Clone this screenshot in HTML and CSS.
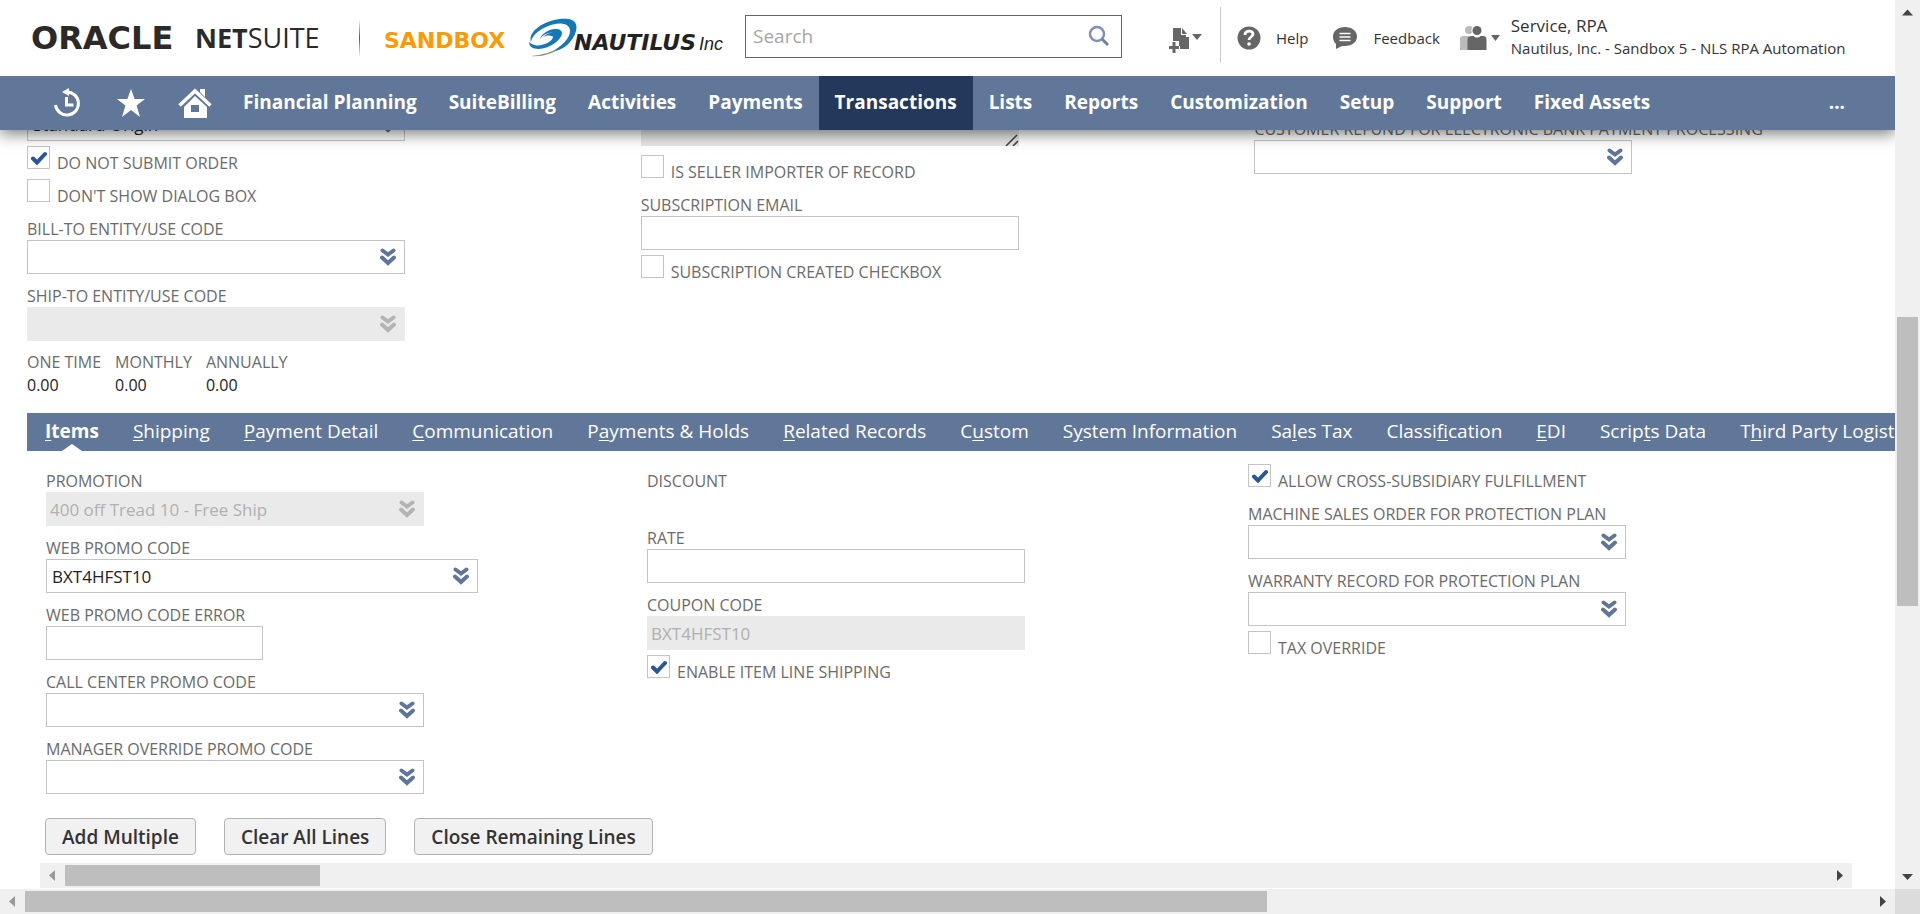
FILE: index.html
```html
<!DOCTYPE html>
<html lang="en">
<head>
<meta charset="utf-8">
<title>Sales Order - NetSuite</title>
<link rel="stylesheet" href="styles.css">
</head>
<body>
<svg class="defs" aria-hidden="true">
  <symbol id="chev" viewBox="0 0 16 18"><path d="M2.500 2.500 8 6.500l5.500-4M2 9.500l6 5.500 6-5.500" fill="none" stroke="currentColor" stroke-width="4" stroke-linecap="round"/></symbol>
  <symbol id="tick" viewBox="0 0 16 14"><path d="M2 7.500 6 11.500 14 3" fill="none" stroke="currentColor" stroke-width="4" stroke-linecap="round"/></symbol>
</svg>
<div class="window">
  <div class="page">
    <header class="top">
      <div class="brandbar">
        <div class="oracle"><span class="oracle-word">ORACLE</span><span class="netsuite"><b>NET</b>SUITE</span></div>
        <span class="brand-rule"></span>
        <span class="sandbox">SANDBOX</span>
        <div class="nautilus">
          <svg width="50" height="40" viewBox="0 0 50 40" aria-hidden="true">
            <path d="M3 24C-1 12 22-1 40 1c12 1 10 14 2 23-6 7-13 9-19 10 11-5 20-15 19-22C41 4 28 4 18 9 9 13 4 18 3 24z" fill="#1478b8"/>
            <path d="M1 24c0 9 15 9 26 1 9-7 9-13 2-14-8-1-17 6-17 10 2-4 9-7 13-6 4 2 1 6-4 9-7 4-15 5-20 0z" fill="#1478b8"/>
            <path d="M15 19c4-4 11-6 13-3 1 2-2 5-5 7 2-3 3-5 0-5-3-1-6 0-8 1z" fill="#1478b8"/>
            <path d="M3 38c11 1 21-2 29-8-8 4-18 7-29 8z" fill="#8b8f68"/>
          </svg>
          <span class="nautilus-word">NAUTILUS</span><span class="nautilus-inc">Inc</span>
        </div>
        <div class="search">
          <input type="text" placeholder="Search" aria-label="Search">
          <svg width="22" height="22" viewBox="0 0 22 22" aria-hidden="true"><circle cx="9" cy="9" r="7" fill="none" stroke="#7e8fb5" stroke-width="2.500"/><path d="M14 14l6 6" stroke="#6d80a8" stroke-width="3"/></svg>
        </div>
        <button class="iconbtn create" aria-label="Create new">
          <svg width="34" height="28" viewBox="0 0 34 28" aria-hidden="true"><path d="M5 2h8v7h5v4h-5v5H11v-3H5z" fill="#666"/><path d="M14 2l5 6h-5zM13 11h8v12h-9v-3h-1v-5h2z" fill="#666"/><path d="M6 16v11M1 21.500h10" stroke="#666" stroke-width="3"/><path d="M24 8h10l-5 6z" fill="#666"/></svg>
        </button>
        <span class="top-rule"></span>
        <a class="toplink" href="#">
          <svg width="24" height="24" viewBox="0 0 24 24" aria-hidden="true"><circle cx="12" cy="12" r="11.500" fill="#666"/><path d="M8 9c0-5 8-5 8-1 0 3-4 3-4 6" fill="none" stroke="#fff" stroke-width="2.800"/><circle cx="12" cy="18" r="1.800" fill="#fff"/></svg>
          Help</a>
        <a class="toplink feedback" href="#">
          <svg width="26" height="24" viewBox="0 0 26 24" aria-hidden="true"><path d="M13 1c7 0 12 4 12 9.500S20 20 13 20c-2 0-3 0-4 .500L4 23v-5C2 16 1 13.500 1 10.500 1 5 6 1 13 1z" fill="#666"/><path d="M7.500 7.500h11M7.500 11h11M7.500 14.500h11" stroke="#fff" stroke-width="1.600"/></svg>
          Feedback</a>
        <button class="iconbtn roles" aria-label="Change role">
          <svg width="40" height="26" viewBox="0 0 40 26" aria-hidden="true"><circle cx="9" cy="5" r="4" fill="#bbb"/><path d="M0 25V14c0-2 1-3 3-3h6v14z" fill="#bbb"/><circle cx="17" cy="5.500" r="5.500" fill="#fff"/><circle cx="17" cy="5.500" r="4.500" fill="#666"/><path d="M7.500 25V15c0-3 1.500-4 4-4h2c2 2 5 2 7 0h2c3 0 4 1 4 4v10z" fill="#666"/><path d="M31 10h9l-4.500 6z" fill="#666"/></svg>
        </button>
        <div class="user"><div class="user-name">Service, RPA</div><div class="user-role">Nautilus, Inc. - Sandbox 5 - NLS RPA Automation</div></div>
      </div>
      <nav class="mainnav">
        <a class="nav-icon" href="#" aria-label="Recent records"><svg width="28" height="30" viewBox="0 0 28 30" aria-hidden="true"><path d="M2.500 17a11.500 11.500 0 1 0 11-13" fill="none" stroke="#fff" stroke-width="3"/><path d="M9 4l7-4v8z" fill="#fff"/><path d="M13.500 9v8h7" fill="none" stroke="#fff" stroke-width="3"/></svg></a>
        <a class="nav-icon" href="#" aria-label="Shortcuts"><svg width="28" height="28" viewBox="0 0 28 28" aria-hidden="true"><path d="M14 0l3.600 10H28l-8.400 6.500L23 28l-9-7-9 7 3.400-11.500L0 10h10.400z" fill="#fff"/></svg></a>
        <a class="nav-icon" href="#" aria-label="Home"><svg width="34" height="30" viewBox="0 0 34 30" aria-hidden="true"><path d="M1.500 17.500 17 3l15.500 14.500" fill="none" stroke="#fff" stroke-width="3.500"/><path d="M22 1h5v8l-5-5z" fill="#fff"/><path d="M17 8l12 11v11H6V19z M13 17v7h8v-7z" fill="#fff" fill-rule="evenodd"/></svg></a>
        <a href="#">Financial Planning</a><a href="#">SuiteBilling</a><a href="#">Activities</a><a href="#">Payments</a><a class="current" href="#">Transactions</a><a href="#">Lists</a><a href="#">Reports</a><a href="#">Customization</a><a href="#">Setup</a><a href="#">Support</a><a href="#">Fixed Assets</a><a class="more" href="#">...</a>
      </nav>
    </header>

    <main>
      <form class="columns summary">
        <div>
          <div class="field"><label for="origin">Origin</label><div class="pick"><select id="origin"><option>Standard Origin</option></select><svg><use href="#chev"/></svg></div></div>
          <label class="check"><span><input type="checkbox" checked><svg><use href="#tick"/></svg></span>Do not submit order</label>
          <label class="check"><span><input type="checkbox"></span>Don't show dialog box</label>
          <div class="field"><label for="billto">Bill-to entity/use code</label><div class="pick"><select id="billto"><option></option></select><svg><use href="#chev"/></svg></div></div>
          <div class="field"><label for="shipto">Ship-to entity/use code</label><div class="pick"><select id="shipto" disabled><option></option></select><svg><use href="#chev"/></svg></div></div>
          <dl class="totals"><div><dt>One time</dt><dd>0.00</dd></div><div><dt>Monthly</dt><dd>0.00</dd></div><div><dt>Annually</dt><dd>0.00</dd></div></dl>
        </div>
        <div>
          <div class="memo"><textarea aria-label="Memo" readonly></textarea><svg width="14" height="12" viewBox="0 0 14 12" aria-hidden="true"><path d="M1 12 12 1M8 12l5-5" stroke="#444" stroke-width="1.600"/></svg></div>
          <label class="check"><span><input type="checkbox"></span>Is seller importer of record</label>
          <div class="field"><label for="email">Subscription email</label><input class="box" id="email" type="text"></div>
          <label class="check"><span><input type="checkbox"></span>Subscription created checkbox</label>
        </div>
        <div class="refund">
          <div class="field"><label for="refund">Customer refund for electronic bank payment processing</label><div class="pick"><select id="refund"><option></option></select><svg><use href="#chev"/></svg></div></div>
        </div>
      </form>

      <nav class="tabs">
        <a class="active" href="#"><u>I</u>tems</a><a href="#"><u>S</u>hipping</a><a href="#"><u>P</u>ayment Detail</a><a href="#"><u>C</u>ommunication</a><a href="#">P<u>a</u>yments &amp; Holds</a><a href="#"><u>R</u>elated Records</a><a href="#">C<u>u</u>stom</a><a href="#">S<u>y</u>stem Information</a><a href="#">Sa<u>l</u>es Tax</a><a href="#">Classi<u>f</u>ication</a><a href="#"><u>E</u>DI</a><a href="#">Scrip<u>t</u>s Data</a><a href="#">T<u>h</u>ird Party Logistics</a>
      </nav>

      <form class="columns items">
        <div>
          <div class="field"><label for="promo">Promotion</label><div class="pick"><select id="promo" disabled><option>400 off Tread 10 - Free Ship</option></select><svg><use href="#chev"/></svg></div></div>
          <div class="field"><label for="web">Web promo code</label><div class="pick wide"><select id="web"><option>BXT4HFST10</option></select><svg><use href="#chev"/></svg></div></div>
          <div class="field"><label for="weberr">Web promo code error</label><input class="box narrow" id="weberr" type="text"></div>
          <div class="field"><label for="call">Call center promo code</label><div class="pick"><select id="call"><option></option></select><svg><use href="#chev"/></svg></div></div>
          <div class="field"><label for="mgr">Manager override promo code</label><div class="pick"><select id="mgr"><option></option></select><svg><use href="#chev"/></svg></div></div>
        </div>
        <div>
          <div class="field discount"><span class="caption">Discount</span></div>
          <div class="field"><label for="rate">Rate</label><input class="box" id="rate" type="text"></div>
          <div class="field"><label for="coupon">Coupon code</label><input class="box" id="coupon" type="text" value="BXT4HFST10" disabled></div>
          <label class="check"><span><input type="checkbox" checked><svg><use href="#tick"/></svg></span>Enable item line shipping</label>
        </div>
        <div>
          <label class="check"><span><input type="checkbox" checked><svg><use href="#tick"/></svg></span>Allow cross-subsidiary fulfillment</label>
          <div class="field"><label for="mso">Machine sales order for protection plan</label><div class="pick"><select id="mso"><option></option></select><svg><use href="#chev"/></svg></div></div>
          <div class="field"><label for="war">Warranty record for protection plan</label><div class="pick"><select id="war"><option></option></select><svg><use href="#chev"/></svg></div></div>
          <label class="check"><span><input type="checkbox"></span>Tax override</label>
        </div>
      </form>

      <div class="actions"><button>Add Multiple</button><button>Clear All Lines</button><button>Close Remaining Lines</button></div>
      <div class="bar list-bar" aria-hidden="true"><i class="arrow left"></i><span class="track"><span class="thumb"></span></span><i class="arrow right"></i></div>
    </main>
  </div>
  <div class="bar vbar" aria-hidden="true"><i class="arrow up"></i><span class="track"><span class="thumb"></span></span><i class="arrow down"></i></div>
  <div class="bar hbar" aria-hidden="true"><i class="arrow left"></i><span class="track"><span class="thumb"></span></span><i class="arrow right"></i></div>
  <div class="corner"></div>
</div>
</body>
</html>
```
FILE: styles.css
```css
* { box-sizing: border-box; }
body { margin: 0; font-family: "Open Sans", sans-serif; font-size: 16px; color: #333; background: #fff; }
a { color: inherit; text-decoration: none; }
button, input, select, textarea { font: inherit; color: inherit; margin: 0; }
.defs { position: absolute; width: 0; height: 0; }

.window { display: grid; grid-template: minmax(0, 1fr) 25px / minmax(0, 1fr) 25px; height: 100vh; }
.page { position: relative; overflow: hidden; }

.top { position: absolute; top: 0; left: 0; right: 0; z-index: 2; background: #fff; box-shadow: 0 4px 14px rgba(0, 0, 0, .5); }
.brandbar { display: flex; align-items: center; height: 76px; padding-left: 31px; white-space: nowrap; }
.oracle { display: flex; align-items: center; width: 328px; line-height: 28px; color: #2b2a29; }
.oracle-word { width: 164px; font: bold 32px/28px "DejaVu Sans", sans-serif; }
.netsuite { font-size: 27px; }
.brand-rule { width: 1px; height: 38px; background: linear-gradient(transparent, #555, transparent); }
.sandbox { width: 144px; margin-left: 24px; padding-top: 6px; font: bold 22px/28px "DejaVu Sans", sans-serif; color: #f90; }
.nautilus { display: flex; align-items: center; width: 217px; color: #222; }
.nautilus-word { margin-left: -4px; padding-top: 10px; font: italic bold 22px/24px "DejaVu Sans", sans-serif; }
.nautilus-inc { padding: 12px 0 0 3px; font: italic 18px/24px "Liberation Sans", sans-serif; }
.search { display: flex; align-items: center; width: 377px; height: 43px; margin-bottom: 4px; padding: 0 11px 0 7px; border: 1px solid #666; }
.search input { flex: 1; min-width: 0; border: 0; padding: 0; outline: 0; background: none; font-size: 19px; }
.search input::placeholder { color: #a5a5a5; opacity: 1; }
.iconbtn { display: flex; padding: 0; border: 0; background: none; }
.create { margin: 4px 18px 0 46px; }
.top-rule { width: 1px; height: 56px; margin-bottom: 6px; background: #ccc; }
.toplink { display: flex; align-items: center; gap: 15px; margin-left: 16px; font-size: 15px; line-height: 24px; }
.feedback { margin-left: 24px; }
.roles { margin: 0 11px 0 20px; }
.user { margin-bottom: 4px; }
.user-name { font-size: 17px; line-height: 23px; }
.user-role { font-size: 15px; line-height: 22px; }

.mainnav { display: flex; align-items: center; height: 54px; padding-left: 35px; background: #607799; color: #fff; font-size: 19px; font-weight: 700; line-height: 52px; white-space: nowrap; }
.mainnav a { height: 54px; padding: 0 16px; }
.mainnav .nav-icon { display: flex; justify-content: center; align-items: center; width: 64px; padding: 0; }
.mainnav .current { background: #24385b; }
.mainnav .more { margin-left: auto; padding: 0 50px; }

main { padding: 74px 0 0 27px; }
.columns { display: grid; grid-template-columns: repeat(3, minmax(0, 1fr)); }
.summary { padding-right: 27px; height: 339px; }
.refund { padding-top: 33px; }
.field { margin-top: 11px; }
.field label, .caption, .totals dt { display: block; line-height: 22px; color: #6b6b6b; text-transform: uppercase; white-space: nowrap; }
.discount { height: 46px; }
.box, .pick { width: 378px; height: 34px; font-size: 17px; }
.box, .pick select { border: 1px solid #c4c4c4; border-radius: 0; padding: 0 5px; background: #fff; color: #222; outline: 0; display: block; }
.pick { display: grid; align-items: center; }
.pick select { grid-area: 1 / 1; width: 100%; height: 34px; appearance: none; }
.pick svg { grid-area: 1 / 1; justify-self: end; width: 16px; height: 18px; margin: 0 9px 1px 0; color: #5f7698; pointer-events: none; }
.box:disabled, .pick select:disabled { background: #eaeaea; border-color: #eaeaea; color: #b0b0b0; opacity: 1; padding-left: 3px; }
.pick select:disabled + svg { color: #b4b4b4; }
.pick.wide { width: 432px; }
.box.narrow { width: 217px; }
.check { display: flex; gap: 7px; height: 28px; margin-top: 5px; line-height: 34px; color: #6b6b6b; text-transform: uppercase; white-space: nowrap; }
.check span { display: grid; place-items: center; width: 23px; height: 23px; }
.check input { grid-area: 1 / 1; appearance: none; width: 23px; height: 23px; border: 1px solid #c4c4c4; background: #fff; }
.check svg { grid-area: 1 / 1; width: 16px; height: 14px; z-index: 1; color: #28569a; pointer-events: none; }
.memo { display: grid; width: 378px; margin-bottom: 9px; }
.memo textarea { grid-area: 1 / 1; height: 72px; border: 0; background: #e6e6e6; resize: none; }
.memo svg { grid-area: 1 / 1; place-self: end; }
.totals { display: flex; gap: 14px; margin: 10px 0 0; }
.totals dd { margin: 0; line-height: 24px; color: #222; }

.tabs { display: flex; gap: 34px; height: 38px; padding-left: 18px; background: #607799; color: #fff; font-size: 19px; line-height: 36px; white-space: nowrap; overflow: hidden; }
.tabs a { flex: none; }
.tabs u { text-underline-offset: 2px; }
.tabs .active { position: relative; font-weight: 700; }
.tabs .active::after { content: ""; position: absolute; bottom: 0; left: calc(50% - 10px); width: 20px; height: 7px; background: #fff; clip-path: polygon(50% 0, 100% 100%, 0 100%); }

.items { padding: 8px 46px 0 19px; }
.actions { display: flex; gap: 28px; margin: 24px 0 8px 18px; }
.actions button { height: 37px; padding: 0 16px; border: 1px solid #b2b2b2; border-radius: 4px; background: #f1f1f1; font-size: 19px; font-weight: 600; color: #333; }

.bar { display: flex; align-items: center; background: #f0f0f0; }
.bar .track { flex: 1; min-width: 0; min-height: 0; }
.bar .thumb { display: block; background: #bebebe; height: 21px; }
.arrow { flex: none; width: 25px; height: 25px; background: #444; }
.arrow.left { background: #999; clip-path: polygon(36% 50%, 60% 28%, 60% 72%); }
.arrow.right { clip-path: polygon(40% 28%, 64% 50%, 40% 72%); }
.arrow.up { clip-path: polygon(28% 62%, 50% 38%, 72% 62%); }
.arrow.down { clip-path: polygon(28% 40%, 50% 64%, 72% 40%); }
.list-bar { margin: 0 43px 0 13px; }
.list-bar .thumb { width: 14.5%; }
.hbar .thumb { width: 67.3%; }
.vbar { flex-direction: column; }
.vbar .track { display: grid; grid-template-rows: 292fr 289fr 258fr; width: 21px; }
.vbar .thumb { grid-row: 2; height: auto; }
.corner { background: #dcdcdc; }
```
